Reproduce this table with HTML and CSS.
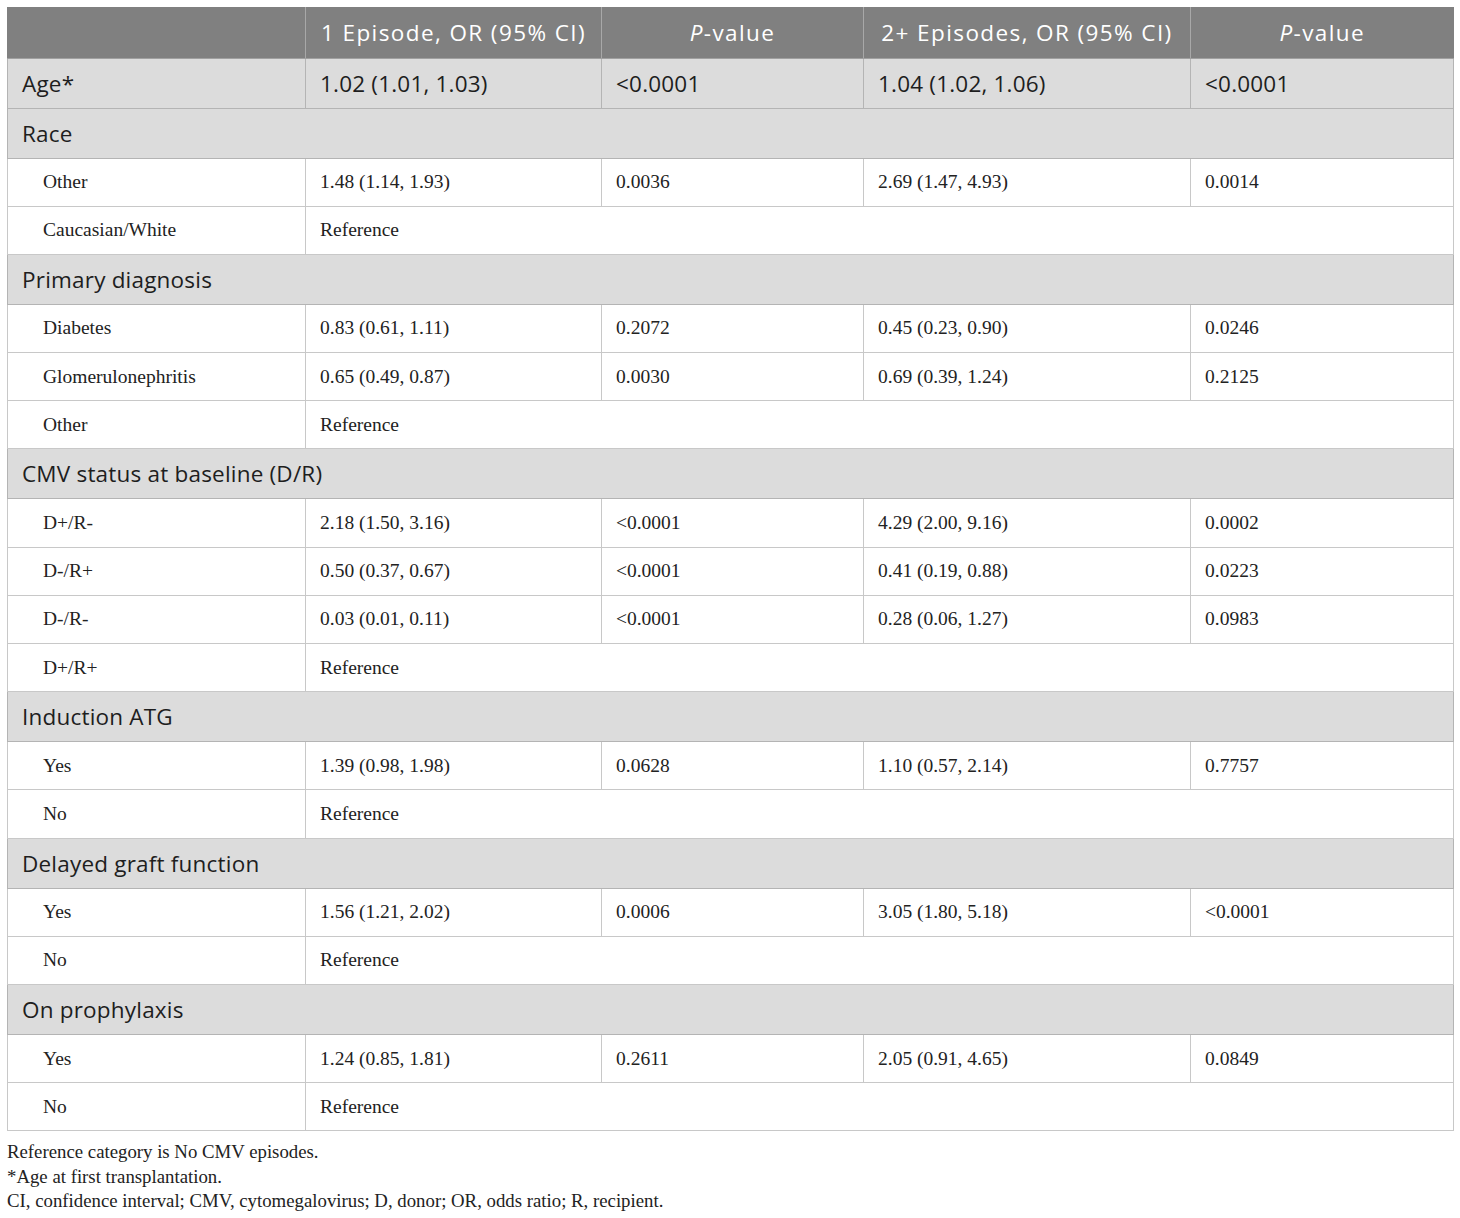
FILE: index.html
```html
<!DOCTYPE html>
<html>
<head>
<meta charset="utf-8">
<link rel="stylesheet" href="styles.css">
</head>
<body>
<table class="tbl">
  <colgroup>
    <col class="c1"><col class="c2"><col class="c3"><col class="c4"><col class="c5">
  </colgroup>
  <thead>
    <tr class="head">
      <th></th>
      <th>1 Episode, OR (95% CI)</th>
      <th><i>P</i>-value</th>
      <th>2+ Episodes, OR (95% CI)</th>
      <th><i>P</i>-value</th>
    </tr>
  </thead>
  <tbody>
    <tr class="grp"><td>Age*</td><td>1.02 (1.01, 1.03)</td><td>&lt;0.0001</td><td>1.04 (1.02, 1.06)</td><td>&lt;0.0001</td></tr>
    <tr class="grp"><td colspan="5">Race</td></tr>
    <tr class="row"><td class="sub">Other</td><td>1.48 (1.14, 1.93)</td><td>0.0036</td><td>2.69 (1.47, 4.93)</td><td>0.0014</td></tr>
    <tr class="row"><td class="sub">Caucasian/White</td><td colspan="4">Reference</td></tr>
    <tr class="grp"><td colspan="5">Primary diagnosis</td></tr>
    <tr class="row"><td class="sub">Diabetes</td><td>0.83 (0.61, 1.11)</td><td>0.2072</td><td>0.45 (0.23, 0.90)</td><td>0.0246</td></tr>
    <tr class="row"><td class="sub">Glomerulonephritis</td><td>0.65 (0.49, 0.87)</td><td>0.0030</td><td>0.69 (0.39, 1.24)</td><td>0.2125</td></tr>
    <tr class="row"><td class="sub">Other</td><td colspan="4">Reference</td></tr>
    <tr class="grp"><td colspan="5">CMV status at baseline (D/R)</td></tr>
    <tr class="row"><td class="sub">D+/R-</td><td>2.18 (1.50, 3.16)</td><td>&lt;0.0001</td><td>4.29 (2.00, 9.16)</td><td>0.0002</td></tr>
    <tr class="row"><td class="sub">D-/R+</td><td>0.50 (0.37, 0.67)</td><td>&lt;0.0001</td><td>0.41 (0.19, 0.88)</td><td>0.0223</td></tr>
    <tr class="row"><td class="sub">D-/R-</td><td>0.03 (0.01, 0.11)</td><td>&lt;0.0001</td><td>0.28 (0.06, 1.27)</td><td>0.0983</td></tr>
    <tr class="row"><td class="sub">D+/R+</td><td colspan="4">Reference</td></tr>
    <tr class="grp"><td colspan="5">Induction ATG</td></tr>
    <tr class="row"><td class="sub">Yes</td><td>1.39 (0.98, 1.98)</td><td>0.0628</td><td>1.10 (0.57, 2.14)</td><td>0.7757</td></tr>
    <tr class="row"><td class="sub">No</td><td colspan="4">Reference</td></tr>
    <tr class="grp"><td colspan="5">Delayed graft function</td></tr>
    <tr class="row"><td class="sub">Yes</td><td>1.56 (1.21, 2.02)</td><td>0.0006</td><td>3.05 (1.80, 5.18)</td><td>&lt;0.0001</td></tr>
    <tr class="row"><td class="sub">No</td><td colspan="4">Reference</td></tr>
    <tr class="grp"><td colspan="5">On prophylaxis</td></tr>
    <tr class="row"><td class="sub">Yes</td><td>1.24 (0.85, 1.81)</td><td>0.2611</td><td>2.05 (0.91, 4.65)</td><td>0.0849</td></tr>
    <tr class="row"><td class="sub">No</td><td colspan="4">Reference</td></tr>
  </tbody>
</table>
<div class="notes">
  <p>Reference category is No CMV episodes.</p>
  <p>*Age at first transplantation.</p>
  <p>CI, confidence interval; CMV, cytomegalovirus; D, donor; OR, odds ratio; R, recipient.</p>
</div>
</body>
</html>
```

FILE: styles.css
```css
html, body {
  margin: 0;
  padding: 0;
  background: #ffffff;
}
body {
  padding: 7px 7px 0 7px;
}
.tbl {
  width: 1446px;
  border-collapse: collapse;
  table-layout: fixed;
}
.c1 { width: 298px; }
.c2 { width: 296px; }
.c3 { width: 262px; }
.c4 { width: 327px; }
.c5 { width: 263px; }

.head th {
  height: 51px;
  padding: 0 10px;
  background: #808080;
  color: #ffffff;
  font-family: "Open Sans", "Noto Sans", sans-serif;
  font-weight: 400;
  font-size: 22.5px;
  letter-spacing: 1.4px;
  text-align: center;
  vertical-align: middle;
  border-left: 1px solid #a8a8a8;
  border-bottom: 1px solid #a0a0a0;
  box-sizing: border-box;
  white-space: nowrap;
}
.head th:first-child { border-left: 1px solid #808080; }
.head th i { font-style: italic; }

td {
  padding: 0 14px;
  vertical-align: middle;
  border: 1px solid #c8c8c8;
  box-sizing: border-box;
  white-space: nowrap;
}
.grp td {
  height: 50px;
  background: #dcdcdc;
  color: #1e1e1e;
  font-family: "Open Sans", "Noto Sans", sans-serif;
  font-size: 22.5px;
  letter-spacing: 0.2px;
  border-color: #b4b4b4;
}
.row td {
  height: 48.2px;
  background: #ffffff;
  color: #222222;
  font-family: "Liberation Serif", "Times New Roman", serif;
  font-size: 19.5px;
}
.row td.sub {
  padding-left: 35px;
}

.notes {
  padding-top: 9px;
  font-family: "Liberation Serif", "Times New Roman", serif;
  font-size: 18.8px;
  color: #222222;
}
.notes p {
  margin: 0;
  line-height: 24.5px;
}
```
